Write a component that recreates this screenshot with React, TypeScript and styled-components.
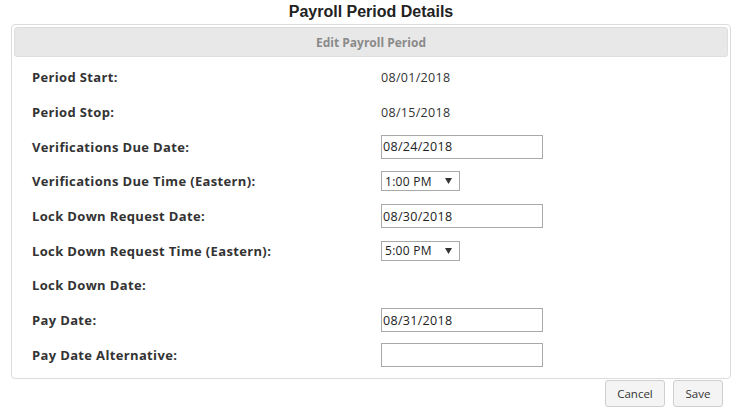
import React, { useState } from 'react';
import styled, { createGlobalStyle } from 'styled-components';

const GlobalStyle = createGlobalStyle`
  html, body {
    margin: 0;
    padding: 0;
    background: #fff;
  }
`;

const Page = styled.div`
  width: 738px;
  padding: 3px 7px 0 11px;
  box-sizing: border-box;
  font-family: 'Open Sans', 'Noto Sans', sans-serif;
  color: #333;
`;

const Title = styled.h1`
  margin: 0 0 3px;
  text-align: center;
  font-family: 'Liberation Sans', Arial, sans-serif;
  font-size: 16px;
  font-weight: bold;
  line-height: 18px;
  color: #222;
`;

const Panel = styled.div`
  border: 1px solid #dcdcdc;
  border-radius: 4px;
  padding: 2px 2px 6px;
  background: #fff;
`;

const PanelHeader = styled.div`
  height: 30px;
  box-sizing: border-box;
  display: flex;
  align-items: center;
  justify-content: center;
  background: #e8e8e8;
  border: 1px solid #dedede;
  border-radius: 3px;
  font-size: 12px;
  font-weight: 700;
  color: #8a8a8a;
`;

const Rows = styled.div`
  display: flex;
  flex-direction: column;
  padding: 3px 0 0 18px;
`;

const Row = styled.div`
  display: grid;
  grid-template-columns: 349px 1fr;
  align-items: center;
  height: 34.7px;
`;

const Label = styled.div`
  font-size: 13px;
  font-weight: 700;
  letter-spacing: 0.35px;
  color: #333;
`;

const Value = styled.div`
  font-size: 12.5px;
  letter-spacing: 0.3px;
  color: #333;
`;

const TextInput = styled.input`
  display: block;
  width: 162px;
  height: 24px;
  box-sizing: border-box;
  border: 1px solid #a9a9a9;
  padding: 0 2px 0 1px;
  font-family: 'Open Sans', 'Noto Sans', sans-serif;
  font-size: 12.5px;
  letter-spacing: 0.3px;
  color: #222;
  outline: none;
`;

const Select = styled.select`
  display: block;
  width: 79px;
  height: 20px;
  box-sizing: border-box;
  border: 1px solid #a9a9a9;
  border-radius: 0;
  padding: 0 0 0 3px;
  font-family: 'Open Sans', 'Noto Sans', sans-serif;
  font-size: 12px;
  letter-spacing: 0.3px;
  color: #222;
  background: #fff;
  appearance: none;
  background-image: url("data:image/svg+xml,%3Csvg xmlns='http://www.w3.org/2000/svg' width='7' height='6'%3E%3Cpath d='M0 0h7L3.5 6z' fill='%23333'/%3E%3C/svg%3E");
  background-repeat: no-repeat;
  background-position: right 7px center;
  outline: none;
`;

const Footer = styled.div`
  display: flex;
  justify-content: flex-end;
  gap: 8px;
  padding: 1px 8px 0 0;
`;

const Button = styled.button<{ $width: number }>`
  width: ${({ $width }) => $width}px;
  height: 27px;
  padding: 0;
  box-sizing: border-box;
  border: 1px solid #cfcfcf;
  border-radius: 3px;
  background: #f4f4f4;
  font-family: 'Open Sans', 'Noto Sans', sans-serif;
  font-size: 11.5px;
  color: #333;
  cursor: pointer;
`;

type Field = {
  label: string;
  kind: 'text' | 'input' | 'select';
  value: string;
};

const times = ['12:00 PM', '1:00 PM', '2:00 PM', '3:00 PM', '4:00 PM', '5:00 PM'];

const initial: Field[] = [
  { label: 'Period Start:', kind: 'text', value: '08/01/2018' },
  { label: 'Period Stop:', kind: 'text', value: '08/15/2018' },
  { label: 'Verifications Due Date:', kind: 'input', value: '08/24/2018' },
  { label: 'Verifications Due Time (Eastern):', kind: 'select', value: '1:00 PM' },
  { label: 'Lock Down Request Date:', kind: 'input', value: '08/30/2018' },
  { label: 'Lock Down Request Time (Eastern):', kind: 'select', value: '5:00 PM' },
  { label: 'Lock Down Date:', kind: 'text', value: '' },
  { label: 'Pay Date:', kind: 'input', value: '08/31/2018' },
  { label: 'Pay Date Alternative:', kind: 'input', value: '' },
];

const App = () => {
  const [fields, setFields] = useState<Field[]>(initial);

  const update = (i: number, value: string) =>
    setFields((prev) => prev.map((f, idx) => (idx === i ? { ...f, value } : f)));

  return (
    <>
      <GlobalStyle />
      <Page>
        <Title>Payroll Period Details</Title>
        <Panel>
          <PanelHeader>Edit Payroll Period</PanelHeader>
          <Rows>
            {fields.map((f, i) => (
              <Row key={f.label}>
                <Label>{f.label}</Label>
                {f.kind === 'text' && <Value>{f.value}</Value>}
                {f.kind === 'input' && (
                  <TextInput value={f.value} onChange={(e) => update(i, e.target.value)} />
                )}
                {f.kind === 'select' && (
                  <Select value={f.value} onChange={(e) => update(i, e.target.value)}>
                    {times.map((t) => (
                      <option key={t}>{t}</option>
                    ))}
                  </Select>
                )}
              </Row>
            ))}
          </Rows>
        </Panel>
        <Footer>
          <Button $width={60}>Cancel</Button>
          <Button $width={50}>Save</Button>
        </Footer>
      </Page>
    </>
  );
};

export default App;
